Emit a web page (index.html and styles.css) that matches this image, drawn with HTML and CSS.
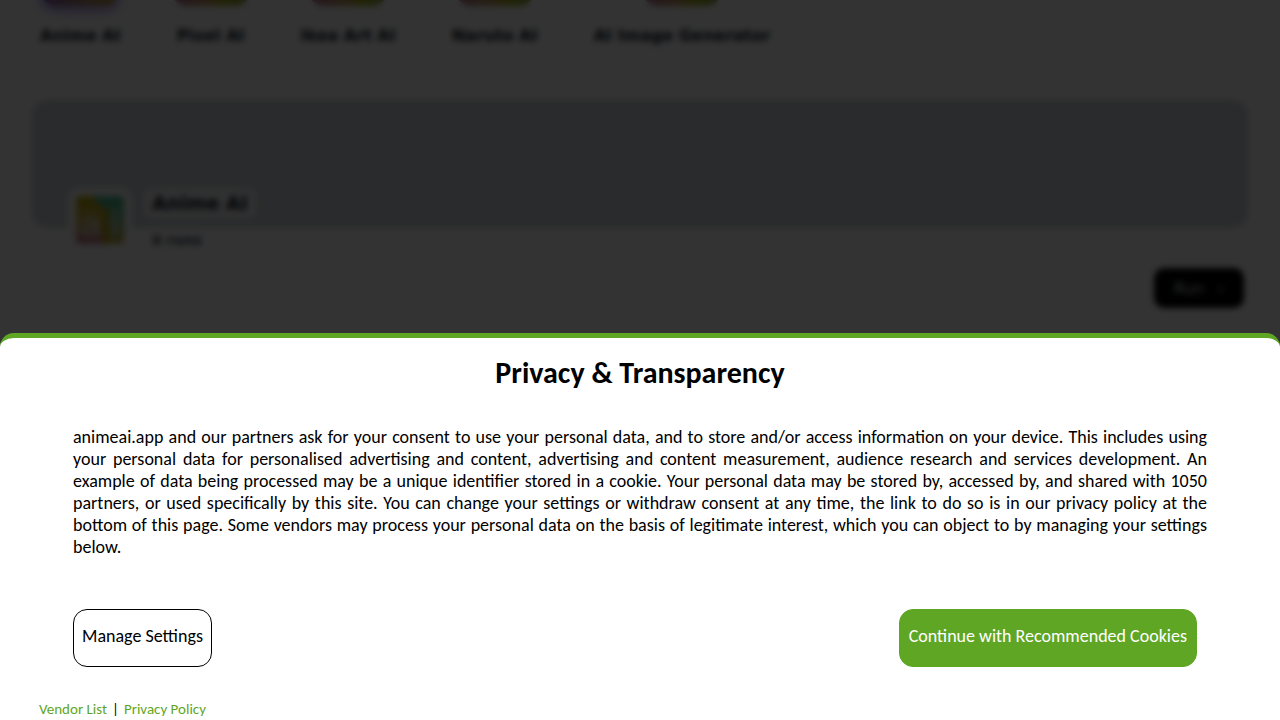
FILE: index.html
```
<!DOCTYPE html>
<html lang="en">
<head>
    <meta charset="UTF-8">
    <meta name="viewport" content="width=device-width, initial-scale=1.0">
    <title>Anime AI</title>
    <link rel="stylesheet" href="styles.css">
</head>
<body>
    <div class="page">
        <nav class="apps">
            <a class="app active" href="#anime"><span class="app-icon"></span>Anime AI</a>
            <a class="app" href="#pixel"><span class="app-icon"></span>Pixel AI</a>
            <a class="app" href="#ikea"><span class="app-icon"></span>Ikea Art AI</a>
            <a class="app" href="#naruto"><span class="app-icon"></span>Naruto AI</a>
            <a class="app" href="#generator"><span class="app-icon"></span>AI Image Generator</a>
        </nav>

        <main>
            <div class="banner"></div>
            <div class="profile">
                <div class="logo">
                    <svg viewBox="0 0 48 48" width="48" height="48" aria-hidden="true">
                        <defs>
                            <linearGradient id="left" x1="0" y1="0" x2="0" y2="1">
                                <stop offset="0" stop-color="#b8a800"/>
                                <stop offset="0.6" stop-color="#d0b060"/>
                                <stop offset="1" stop-color="#c07090"/>
                            </linearGradient>
                            <linearGradient id="right" x1="0" y1="0" x2="0" y2="1">
                                <stop offset="0" stop-color="#40b898"/>
                                <stop offset="0.5" stop-color="#80b888"/>
                                <stop offset="1" stop-color="#c0a840"/>
                            </linearGradient>
                        </defs>
                        <rect width="32" height="48" rx="4" fill="url(#left)"/>
                        <path d="M16 0h28a4 4 0 0 1 4 4v40a4 4 0 0 1-4 4H27V12z" fill="url(#right)"/>
                        <rect x="27" y="12" width="5" height="36" fill="#b8a000"/>
                        <text class="logo-letter" x="4" y="40">a</text>
                        <text class="logo-letter" x="34" y="40">i</text>
                    </svg>
                </div>
                <div class="profile-text">
                    <h1>Anime AI</h1>
                    <p>0 runs</p>
                </div>
            </div>
            <div class="actions">
                <button class="run" type="button">Run <span>›</span></button>
            </div>
        </main>
    </div>

    <!-- Dark layer between the page and the dialog -->
    <div class="backdrop"></div>

    <!-- Cookie consent -->
    <section class="consent" role="dialog" aria-labelledby="consent-title">
        <h2 id="consent-title">Privacy &amp; Transparency</h2>
        <p class="consent-text">animeai.app and our partners ask for your consent to use your personal data, and to store and/or access information on your device. This includes using your personal data for personalised advertising and content, advertising and content measurement, audience research and services development. An example of data being processed may be a unique identifier stored in a cookie. Your personal data may be stored by, accessed by, and shared with 1050 partners, or used specifically by this site. You can change your settings or withdraw consent at any time, the link to do so is in our privacy policy at the bottom of this page. Some vendors may process your personal data on the basis of legitimate interest, which you can object to by managing your settings below.</p>
        <div class="consent-buttons">
            <button class="manage" type="button">Manage Settings</button>
            <button class="accept" type="button">Continue with Recommended Cookies</button>
        </div>
        <footer class="consent-links">
            <a href="#vendors">Vendor List</a>
            <span>|</span>
            <a href="#privacy">Privacy Policy</a>
        </footer>
    </section>
</body>
</html>
```
FILE: styles.css
```
* {
    margin: 0;
    padding: 0;
    box-sizing: border-box;
}

body {
    min-height: 100vh;
    overflow: hidden;
    background-color: #fff;
    color: #000;
    font-family: "DejaVu Sans", sans-serif;
}

a {
    text-decoration: none;
}

/* Page */
.page {
    padding: 0 32px;
}

/* App list, scrolled partly out of view */
.apps {
    display: flex;
    gap: 56px;
    margin-top: -74px;
    padding: 0 8px;
}

.app {
    display: flex;
    flex-direction: column;
    align-items: center;
    gap: 20px;
    color: #111827;
    font-size: 16px;
    font-weight: bold;
    line-height: 20px;
}

.app-icon {
    width: 80px;
    height: 80px;
    margin: 0 -8px; /* icon may be wider than a short name */
    border-radius: 16px;
    background: linear-gradient(90deg, #b0709a, #c09860 45%, #a8b020 65%, #88a048);
}

.active .app-icon {
    background: linear-gradient(90deg, #8058b0, #b08868 60%, #c09840);
    box-shadow: 0 4px 8px 2px #b8a8f0;
}

.banner {
    height: 128px;
    margin-top: 54px;
    border-radius: 16px;
    background-color: #d1d5db;
}

.profile {
    display: flex;
    gap: 12px;
    margin-top: -40px;
    padding-left: 36px;
}

.logo {
    width: 64px;
    height: 64px;
    padding: 8px;
    border-radius: 12px;
    background-color: #fff;
}

.logo-letter {
    fill: #e0e0d0;
    font-size: 34px;
}

.profile-text h1 {
    padding: 0 8px;
    border-radius: 6px;
    background-color: #f3f4f6;
    color: #111827;
    font-size: 19px;
    line-height: 30px;
}

.profile-text p {
    margin-top: 12px;
    padding: 0 8px;
    color: #374151;
    font-size: 14px;
    font-weight: bold;
    line-height: 20px;
}

.actions {
    display: flex;
    justify-content: flex-end;
    padding: 16px 4px;
}

.run {
    height: 40px;
    padding: 0 20px;
    border: 0;
    border-radius: 10px;
    background-color: #000;
    color: #d1d5db;
    font-family: inherit;
    font-size: 16px;
}

.run span {
    margin-left: 8px;
}

.backdrop {
    position: fixed;
    inset: 0;
    background-color: rgba(0, 0, 0, 0.8);
    backdrop-filter: blur(3px);
}

/* Consent dialog */
.consent {
    position: fixed;
    right: 0;
    bottom: 0;
    left: 0;
    border-top: 5px solid #5fa624;
    border-radius: 14px 14px 0 0;
    background-color: #fff;
    font-family: Carlito, Calibri, Lato, sans-serif;
    font-size: 18px;
    line-height: 22px;
}

.consent h2 {
    padding-top: 17px;
    font-size: 30px;
    line-height: 36px;
    text-align: center;
}

.consent-text {
    padding: 35px 73px 0;
    text-align: justify;
}

.consent-buttons {
    display: flex;
    flex-wrap: wrap;
    justify-content: space-between;
    gap: 16px;
    padding: 51px 83px 0 73px;
}

.consent-buttons button {
    height: 58px;
    padding: 0 9px 4px;
    border: 1px solid #000;
    border-radius: 14px;
    background-color: #fff;
    color: #000;
    font: inherit;
    cursor: pointer;
}

.consent-buttons .manage {
    padding: 0 8px 4px;
}

.consent-buttons .accept {
    border-color: #5fa624;
    background-color: #5fa624;
    color: #fff;
}

.consent-links {
    display: flex;
    gap: 5px;
    padding: 31px 39px 0;
    font-size: 15px;
}

.consent-links a {
    color: #5fa624;
}
```
